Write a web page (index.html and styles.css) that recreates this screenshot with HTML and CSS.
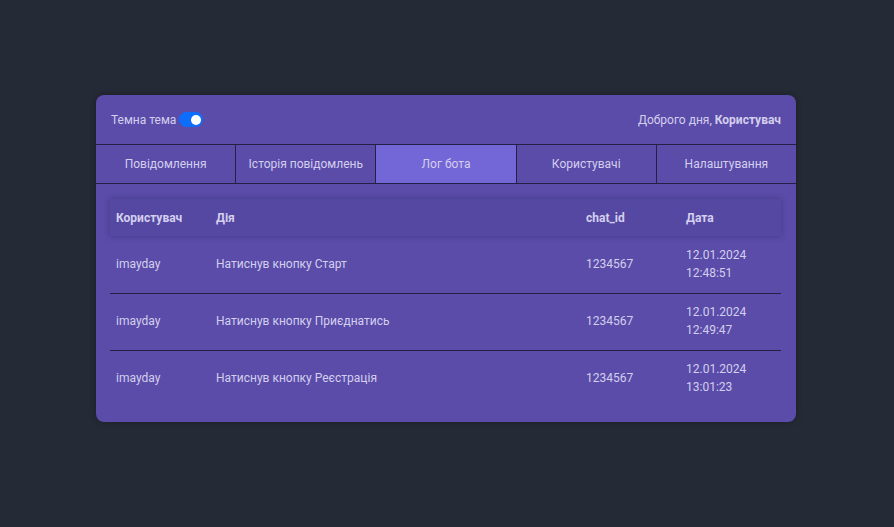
FILE: index.html
```html
<!DOCTYPE html>
<html lang="uk">
<head>
<meta charset="utf-8">
<link rel="stylesheet" href="styles.css">
</head>
<body>
<div class="page">
  <div class="card">
    <div class="topbar">
      <div class="theme">
        <span>Темна тема</span>
        <span class="switch"><span class="knob"></span></span>
      </div>
      <div class="greet">Доброго дня, <b>Користувач</b></div>
    </div>
    <div class="tabs">
      <div class="tab">Повідомлення</div>
      <div class="tab">Історія повідомлень</div>
      <div class="tab active">Лог бота</div>
      <div class="tab">Користувачі</div>
      <div class="tab">Налаштування</div>
    </div>
    <div class="content">
      <table class="log">
        <thead>
          <tr><th class="c1">Користувач</th><th class="c2">Дія</th><th class="c3">chat_id</th><th class="c4">Дата</th></tr>
        </thead>
        <tbody>
          <tr><td>imayday</td><td>Натиснув кнопку Старт</td><td>1234567</td><td>12.01.2024<br>12:48:51</td></tr>
          <tr><td>imayday</td><td>Натиснув кнопку Приєднатись</td><td>1234567</td><td>12.01.2024<br>12:49:47</td></tr>
          <tr><td>imayday</td><td>Натиснув кнопку Реєстрація</td><td>1234567</td><td>12.01.2024<br>13:01:23</td></tr>
        </tbody>
      </table>
    </div>
  </div>
</div>
</body>
</html>
```
FILE: styles.css
```css
* { box-sizing: border-box; }
html, body { margin: 0; padding: 0; }
body {
  background: #252b36;
  font-family: Roboto, "Liberation Sans", Arial, sans-serif;
  font-size: 12px;
  color: #d4cfee;
}
.page {
  width: 894px;
  height: 527px;
  padding: 95px 0 0 96px;
  display: flex;
  align-items: flex-start;
}
.card {
  width: 700px;
  background: #5a4ca8;
  border-radius: 8px;
  box-shadow: 0 0 6px rgba(0,0,0,0.35);
  overflow: hidden;
}
.topbar {
  height: 49px;
  padding: 0 15px;
  display: flex;
  align-items: center;
  justify-content: space-between;
}
.theme { display: flex; align-items: center; gap: 3px; }
.switch {
  width: 24px;
  height: 15px;
  border-radius: 8px;
  background: #0d6efd;
  position: relative;
  display: inline-block;
}
.knob {
  position: absolute;
  right: 2px;
  top: 2.5px;
  width: 10px;
  height: 10px;
  border-radius: 50%;
  background: #fff;
}
.greet b { font-weight: 700; }
.tabs {
  display: flex;
  border-top: 1px solid #231f45;
  border-bottom: 1px solid #231f45;
}
.tab {
  flex: 1;
  height: 38px;
  display: flex;
  align-items: center;
  justify-content: center;
  border-right: 1px solid #231f45;
  background: #5a4ca8;
}
.tab:last-child { border-right: none; }
.tab.active { background: #7366d6; }
.content { padding: 15px 15px 15px 14px; }
.log {
  width: 100%;
  border-collapse: collapse;
}
.log thead tr {
  background: #5548a3;
  box-shadow: 0 0 6px rgba(40,30,100,0.45);
}
.log th {
  text-align: left;
  font-weight: 700;
  height: 37px;
  padding: 0 6px;
}
.log .c1 { width: 100px; }
.log .c2 { width: 370px; }
.log .c3 { width: 100px; }
.log td {
  padding: 9px 6px 10px;
  line-height: 18px;
  height: 57px;
  vertical-align: middle;
  border-bottom: 1px solid #231f45;
}
.log tbody tr:last-child td { border-bottom: none; }
```
